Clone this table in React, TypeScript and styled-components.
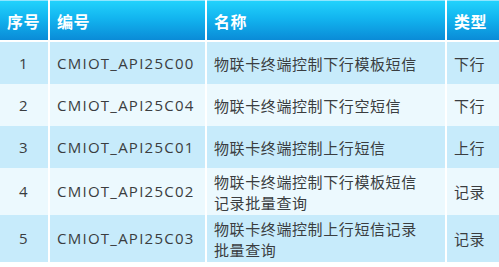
import React from 'react';
import styled, { createGlobalStyle } from 'styled-components';

const GlobalStyle = createGlobalStyle`
  html, body {
    margin: 0;
    padding: 0;
    background: #ffffff;
  }
  body {
    font-family: 'Open Sans', 'Noto Sans CJK SC', sans-serif;
  }
`;

const Table = styled.div`
  display: grid;
  grid-template-columns: 48px 155px 238px 52px;
  grid-template-rows: 42px 42px 42px 42px 47px 47px;
  column-gap: 2px;
  width: 499px;
  background: #ffffff;
`;

const HeadCell = styled.div`
  display: flex;
  align-items: center;
  padding: 0 7px;
  margin-bottom: 2px;
  background: linear-gradient(to bottom, #22d2fc 0%, #12b4ef 45%, #0a8bd7 100%);
  border-top: 1px solid #8ee6ff;
  color: #ffffff;
  font-family: 'Noto Sans CJK SC', sans-serif;
  font-weight: 700;
  font-size: 16px;
  letter-spacing: 0.5px;
`;

const Cell = styled.div<{ $alt: boolean; $center?: boolean }>`
  display: flex;
  align-items: center;
  justify-content: ${(p) => (p.$center ? 'center' : 'flex-start')};
  padding: 0 7px;
  background: ${(p) => (p.$alt ? '#ecf9fe' : '#c7ebfb')};
  color: #3a3d40;
  font-size: 15px;
  line-height: 21px;
`;

const Code = styled.span`
  font-family: 'Open Sans', sans-serif;
  letter-spacing: 1.25px;
`;

const Name = styled.span`
  font-family: 'Noto Sans CJK SC', sans-serif;
  letter-spacing: 0.6px;
`;

const rows = [
  { no: 1, code: 'CMIOT_API25C00', name: ['物联卡终端控制下行模板短信'], type: '下行' },
  { no: 2, code: 'CMIOT_API25C04', name: ['物联卡终端控制下行空短信'], type: '下行' },
  { no: 3, code: 'CMIOT_API25C01', name: ['物联卡终端控制上行短信'], type: '上行' },
  { no: 4, code: 'CMIOT_API25C02', name: ['物联卡终端控制下行模板短信', '记录批量查询'], type: '记录' },
  { no: 5, code: 'CMIOT_API25C03', name: ['物联卡终端控制上行短信记录', '批量查询'], type: '记录' },
];

export default function App() {
  return (
    <>
      <GlobalStyle />
      <Table>
        <HeadCell>序号</HeadCell>
        <HeadCell>编号</HeadCell>
        <HeadCell>名称</HeadCell>
        <HeadCell>类型</HeadCell>
        {rows.map((r, i) => {
          const alt = i % 2 === 1;
          return (
            <React.Fragment key={r.no}>
              <Cell $alt={alt} $center>
                <Code>{r.no}</Code>
              </Cell>
              <Cell $alt={alt}>
                <Code>{r.code}</Code>
              </Cell>
              <Cell $alt={alt}>
                <Name>
                  {r.name.map((line, j) => (
                    <React.Fragment key={j}>
                      {j > 0 && <br />}
                      {line}
                    </React.Fragment>
                  ))}
                </Name>
              </Cell>
              <Cell $alt={alt}>
                <Name>{r.type}</Name>
              </Cell>
            </React.Fragment>
          );
        })}
      </Table>
    </>
  );
}
